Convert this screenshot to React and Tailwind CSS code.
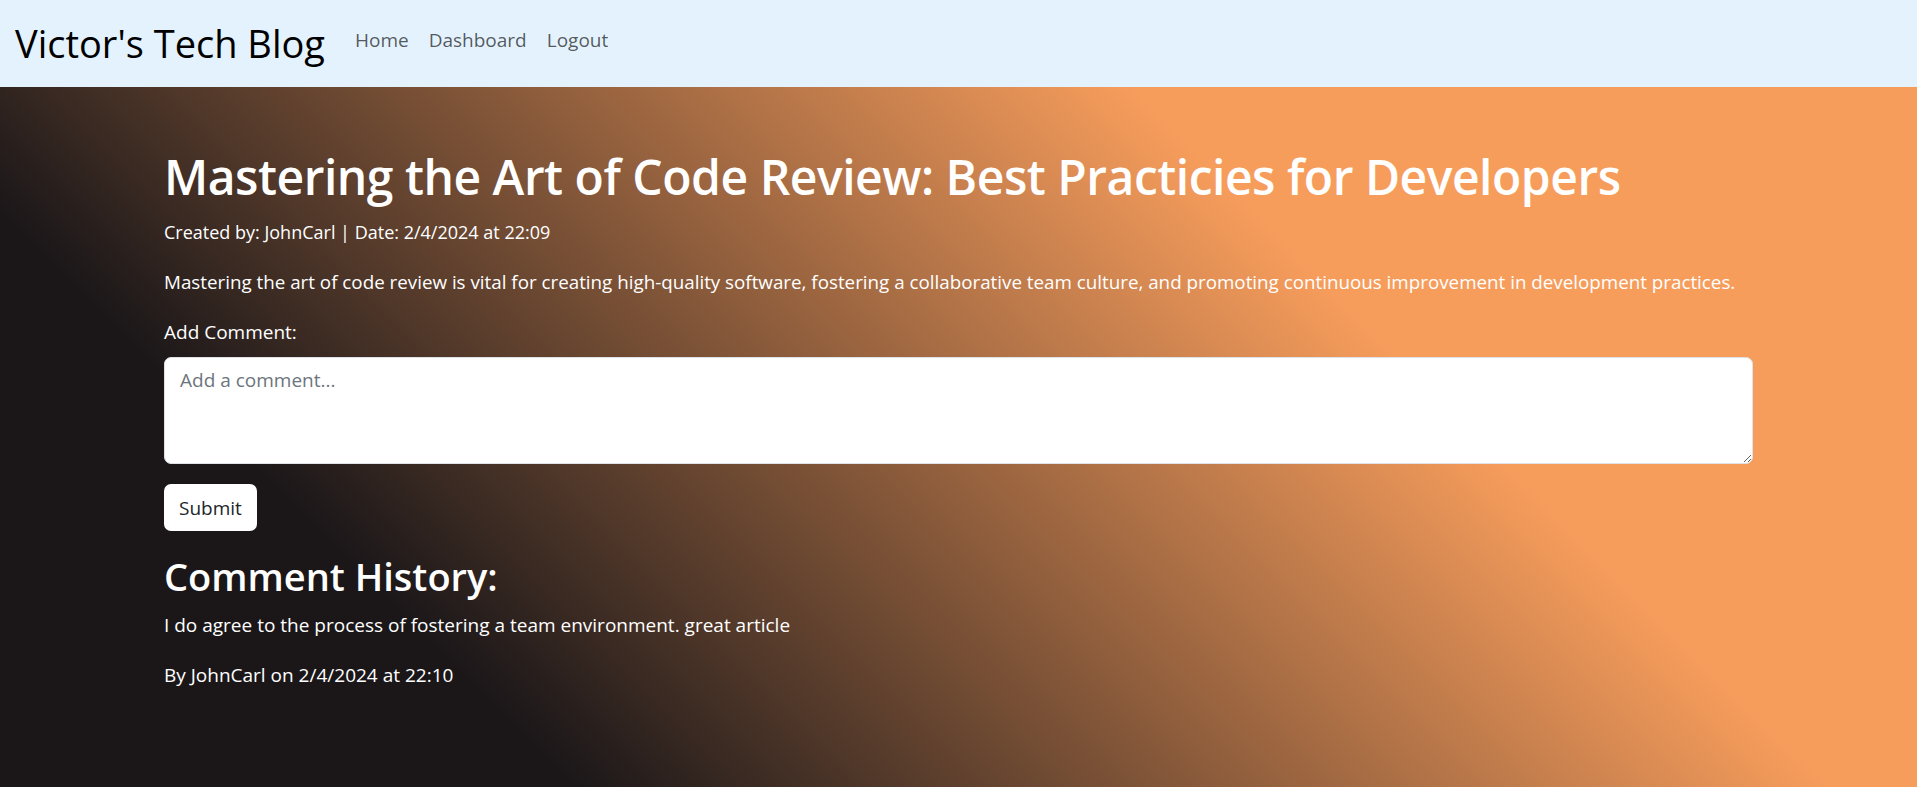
export default function App() {
  return (
    <div className="flex min-h-screen flex-col font-['Open_Sans','Noto_Sans',sans-serif]">
      {/* Navbar */}
      <nav className="flex h-[87px] shrink-0 items-center bg-[#e3f2fd] px-[15px]">
        <a className="mr-[20px] text-[38px] leading-[1.2] text-black">Victor's Tech Blog</a>
        <div className="flex items-center pb-[8px]">
          <a className="px-[10px] text-[19px] leading-[30px] text-black/65">Home</a>
          <a className="px-[10px] text-[19px] leading-[30px] text-black/65">Dashboard</a>
          <a className="px-[10px] text-[19px] leading-[30px] text-black/65">Logout</a>
        </div>
      </nav>

      {/* Post */}
      <main className="flex-1 bg-[linear-gradient(45deg,#1b1719_22%,#f79d5c_70%)] pt-[60px] text-white">
        <div className="mx-[164px]">
          <h1 className="mb-[10px] text-[48px] font-semibold leading-[60px] tracking-[-0.01em]">
            Mastering the Art of Code Review: Best Practicies for Developers
          </h1>
          <p className="mb-[20px] text-[18px] leading-[30px]">Created by: JohnCarl | Date: 2/4/2024 at 22:09</p>
          <p className="mb-[20px] text-[18.8px] leading-[30px]">
            Mastering the art of code review is vital for creating high-quality software, fostering a collaborative team culture, and promoting continuous improvement in development practices.
          </p>

          <form onSubmit={(e) => e.preventDefault()}>
            <label className="mb-[10px] block text-[19px] leading-[30px]">Add Comment:</label>
            <textarea
              rows={3}
              placeholder="Add a comment..."
              className="mb-[20px] block h-[107px] w-full rounded-[7px] border border-[#dee2e6] bg-white px-[15px] py-[7px] text-[19px] leading-[30px] text-[#212529] outline-none placeholder:text-[#6c757d]"
            />
            <button
              type="submit"
              className="h-[47px] rounded-[7px] bg-white px-[15px] text-[19px] leading-[30px] text-[#212529]"
            >
              Submit
            </button>
          </form>

          <h2 className="mt-[21px] mb-[10px] text-[38px] font-semibold leading-[48px]">Comment History:</h2>
          <p className="mb-[20px] text-[19px] leading-[30px]">I do agree to the process of fostering a team environment. great article</p>
          <p className="mb-[20px] text-[19px] leading-[30px]">By JohnCarl on 2/4/2024 at 22:10</p>
        </div>
      </main>
    </div>
  )
}
